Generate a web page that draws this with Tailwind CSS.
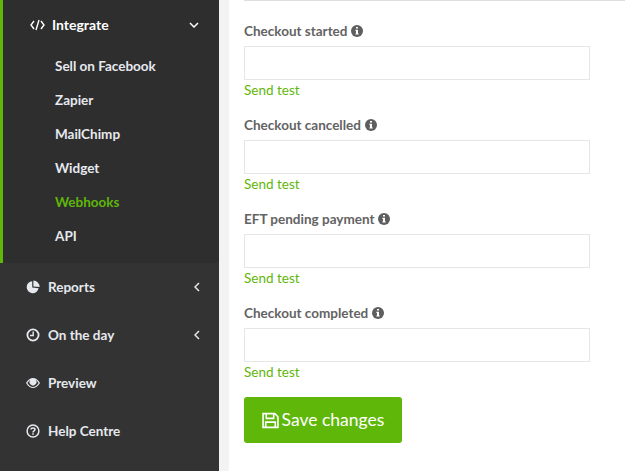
<!DOCTYPE html>
<html lang="en">
<head>
    <meta charset="UTF-8">
    <title>Webhooks</title>
    <script src="https://cdn.jsdelivr.net/npm/@tailwindcss/browser@4"></script>
</head>
<body class="h-[471px] w-[625px] overflow-hidden bg-[#f3f3f3] font-['Lato','Noto_Sans',sans-serif]">
<div class="flex h-[471px]">
    <!-- sidebar -->
    <aside class="w-[219px] h-full bg-[#333333] text-[#e6e9ee] text-[13.5px] font-bold shrink-0">
        <div class="h-[263px] bg-[#2e2e2e] border-l-[3px] border-[#5fb709]">
            <div class="h-[49px] flex items-center pl-[27px] pr-[20px] text-white">
                <svg class="w-[15px] h-[12px] mr-[7px]" viewBox="0 0 15 12" fill="none" stroke="currentColor" stroke-width="1.4"><path d="M4 2 L1 6 L4 10 M11 2 L14 6 L11 10 M9 1 L6 11"/></svg>
                <span class="text-[14px]">Integrate</span>
                <svg class="ml-auto w-[10px] h-[6px]" viewBox="0 0 10 6" fill="none" stroke="currentColor" stroke-width="1.5"><path d="M1 1 L5 5 L9 1"/></svg>
            </div>
            <ul class="pl-[52px]">
                <li class="h-[34px] flex items-center">Sell on Facebook</li>
                <li class="h-[34px] flex items-center">Zapier</li>
                <li class="h-[34px] flex items-center">MailChimp</li>
                <li class="h-[34px] flex items-center">Widget</li>
                <li class="h-[34px] flex items-center text-[#5fb709]">Webhooks</li>
                <li class="h-[34px] flex items-center">API</li>
            </ul>
        </div>
        <div class="h-[48px] flex items-center pl-[26px] pr-[19px]">
            <svg class="w-[14px] h-[14px] mr-[8px]" viewBox="0 0 14 14" fill="currentColor"><path d="M6.2 1.2 A6 6 0 1 0 12.6 8.2 L6.2 7.6 Z M7.4 0.4 V6.4 L13.6 6.9 A6.4 6.4 0 0 0 7.4 0.4 Z"/></svg>
            <span>Reports</span>
            <svg class="ml-auto w-[6px] h-[10px]" viewBox="0 0 6 10" fill="none" stroke="currentColor" stroke-width="1.5"><path d="M5 1 L1 5 L5 9"/></svg>
        </div>
        <div class="h-[48px] flex items-center pl-[26px] pr-[19px]">
            <svg class="w-[14px] h-[14px] mr-[8px]" viewBox="0 0 14 14" fill="none" stroke="currentColor" stroke-width="1.8"><circle cx="7" cy="7" r="5.6"/><path stroke-width="1.4" d="M7.2 3.5 V7.5 H4"/></svg>
            <span>On the day</span>
            <svg class="ml-auto w-[6px] h-[10px]" viewBox="0 0 6 10" fill="none" stroke="currentColor" stroke-width="1.5"><path d="M5 1 L1 5 L5 9"/></svg>
        </div>
        <div class="h-[48px] flex items-center pl-[26px] pr-[19px]">
            <svg class="w-[14px] h-[10px] mr-[8px]" viewBox="0 0 14 10" fill="currentColor"><path fill-rule="evenodd" d="M0 5 C2 1.500 4.500 0 7 0 C9.500 0 12 1.500 14 5 C12 8.500 9.500 10 7 10 C4.500 10 2 8.500 0 5 Z M1.400 5 C3 7.600 5 8.900 7 8.900 C9 8.900 11 7.600 12.600 5 C11.500 3.200 10.300 2.100 9.800 1.900 A3.500 3.500 0 1 1 4.200 1.900 C3.700 2.100 2.500 3.200 1.400 5 Z"/></svg>
            <span>Preview</span>
        </div>
        <div class="h-[48px] flex items-center pl-[26px] pr-[19px]">
            <svg class="w-[14px] h-[14px] mr-[8px]" viewBox="0 0 14 14" fill="none" stroke="currentColor"><circle cx="7" cy="7" r="5.9" stroke-width="1.5"/><path stroke-width="1.5" d="M5 5.600 C5 3.400 9 3.400 9 5.600 C9 7 7 6.800 7 8.400"/><path stroke-width="1.500" d="M7 9.300 V10.800"/></svg>
            <span>Help Centre</span>
        </div>
    </aside>

    <!-- main -->
    <main class="ml-[10px] flex-1 bg-white h-full pl-[15px] text-[13.5px]">
        <div class="h-[1px] bg-[#dddddd] mb-[21px]"></div>
        <div class="w-[346px] flex flex-col gap-[16px]">
            <div>
                <label class="h-[18px] flex items-center gap-[4px] font-bold text-[#636363]">Checkout started
                    <svg class="w-[12px] h-[12px]" viewBox="0 0 12 12"><circle cx="6" cy="6" r="6" fill="#5e5e5e"/><path fill="#fff" d="M5 2h2v1.600H5z M4.400 4.800H7v3.600h.7v1.200H4.400V8.400H5V6H4.400z"/></svg>
                </label>
                <input type="text" class="block mt-[6px] w-full h-[34px] border border-[#e6e6e6] bg-white">
                <a class="block h-[20px] leading-[20px] text-[#5fb709]">Send test</a>
            </div>
            <div>
                <label class="h-[18px] flex items-center gap-[4px] font-bold text-[#636363]">Checkout cancelled
                    <svg class="w-[12px] h-[12px]" viewBox="0 0 12 12"><circle cx="6" cy="6" r="6" fill="#5e5e5e"/><path fill="#fff" d="M5 2h2v1.600H5z M4.400 4.800H7v3.600h.7v1.200H4.400V8.400H5V6H4.400z"/></svg>
                </label>
                <input type="text" class="block mt-[6px] w-full h-[34px] border border-[#e6e6e6] bg-white">
                <a class="block h-[20px] leading-[20px] text-[#5fb709]">Send test</a>
            </div>
            <div>
                <label class="h-[18px] flex items-center gap-[4px] font-bold text-[#636363]">EFT pending payment
                    <svg class="w-[12px] h-[12px]" viewBox="0 0 12 12"><circle cx="6" cy="6" r="6" fill="#5e5e5e"/><path fill="#fff" d="M5 2h2v1.600H5z M4.400 4.800H7v3.600h.7v1.200H4.400V8.400H5V6H4.400z"/></svg>
                </label>
                <input type="text" class="block mt-[6px] w-full h-[34px] border border-[#e6e6e6] bg-white">
                <a class="block h-[20px] leading-[20px] text-[#5fb709]">Send test</a>
            </div>
            <div>
                <label class="h-[18px] flex items-center gap-[4px] font-bold text-[#636363]">Checkout completed
                    <svg class="w-[12px] h-[12px]" viewBox="0 0 12 12"><circle cx="6" cy="6" r="6" fill="#5e5e5e"/><path fill="#fff" d="M5 2h2v1.600H5z M4.400 4.800H7v3.600h.7v1.200H4.400V8.400H5V6H4.400z"/></svg>
                </label>
                <input type="text" class="block mt-[6px] w-full h-[34px] border border-[#e6e6e6] bg-white">
                <a class="block h-[20px] leading-[20px] text-[#5fb709]">Send test</a>
            </div>
        </div>
        <button type="button" class="mt-[15px] w-[158px] h-[46px] rounded-[3px] bg-[#5fb709] text-white text-[17.5px] flex items-center justify-center gap-[3px]">
            <svg class="w-[17px] h-[17px]" viewBox="0 0 16 16" fill="none" stroke="currentColor" stroke-width="1.500"><path d="M1 1.500 H12 L15 4.500 V14.500 H1 Z"/><path d="M4 1.500 V6 H11 V1.500"/><path d="M3.500 14.500 V9.500 H12.500 V14.500"/></svg>
            Save changes
        </button>
    </main>
</div>
</body>
</html>
